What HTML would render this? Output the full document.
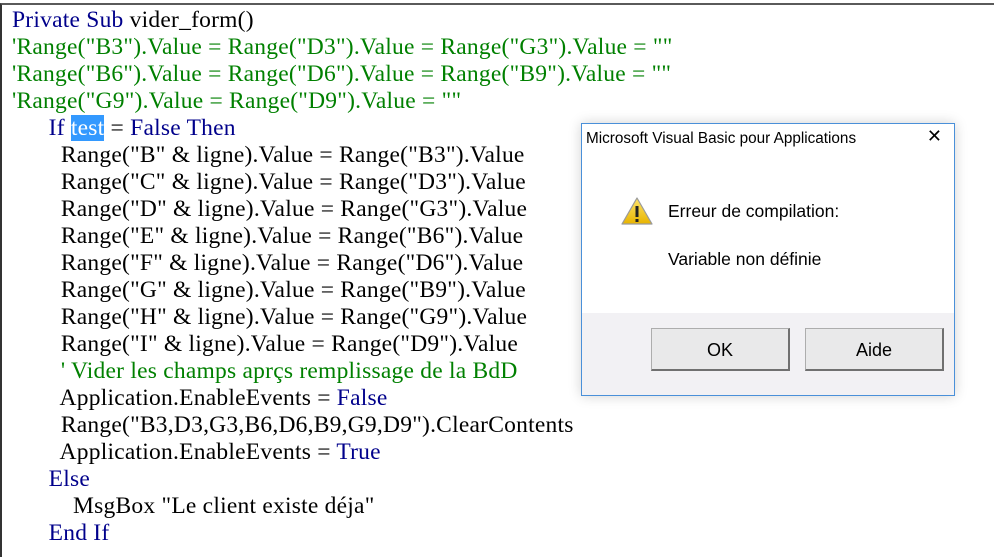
<!DOCTYPE html>
<html><head><meta charset="utf-8"><style>
html,body{margin:0;padding:0;width:994px;height:557px;overflow:hidden;background:#fff}
.ed{position:absolute;left:0;top:3px;width:994px;height:554px;border-top:2px solid #5a5a5a;border-left:2px solid #333;box-sizing:border-box;background:#fff}
.code{position:absolute;left:12px;top:7px;font-family:"Liberation Serif",serif;font-size:23.5px;letter-spacing:0.23px;line-height:27px;white-space:pre;color:#000}
.k{color:#00008b}.c{color:#008000}
.hl{background:#3399ff;color:#fff}
.dlg{position:absolute;left:581px;top:123px;width:374px;height:273px;box-sizing:border-box;border:1px solid #4a90d9;background:#fff;box-shadow:0 0 12px rgba(0,0,0,0.18)}
.title{position:absolute;left:4px;top:6px;color:#000;font-family:"Liberation Sans",sans-serif;font-size:15.3px}
.x{position:absolute;right:12px;top:2px;font-size:18px;color:#000;font-family:"Liberation Sans",sans-serif}
.msg{position:absolute;left:86px;color:#000;font-family:"Liberation Sans",sans-serif;font-size:17.5px}
.foot{position:absolute;left:0;right:0;top:189px;bottom:0;background:#f2f1f4}
.btn{position:absolute;top:15px;width:139px;height:43px;box-sizing:border-box;border:1px solid #adadad;border-right:2px solid #707070;border-bottom:2px solid #707070;background:#e9e9ea;text-align:center;line-height:42px;font-size:18px;font-family:"Liberation Sans",sans-serif}
</style></head><body>
<div class="ed"></div>
<div class="code"><span class="k">Private Sub</span> vider_form()
<span class="c">'Range("B3").Value = Range("D3").Value = Range("G3").Value = ""</span>
<span class="c">'Range("B6").Value = Range("D6").Value = Range("B9").Value = ""</span>
<span class="c">'Range("G9").Value = Range("D9").Value = ""</span>
      <span class="k">If</span> <span class="hl">test</span> = <span class="k">False Then</span>
        Range("B" &amp; ligne).Value = Range("B3").Value
        Range("C" &amp; ligne).Value = Range("D3").Value
        Range("D" &amp; ligne).Value = Range("G3").Value
        Range("E" &amp; ligne).Value = Range("B6").Value
        Range("F" &amp; ligne).Value = Range("D6").Value
        Range("G" &amp; ligne).Value = Range("B9").Value
        Range("H" &amp; ligne).Value = Range("G9").Value
        Range("I" &amp; ligne).Value = Range("D9").Value
        <span class="c">' Vider les champs aprçs remplissage de la BdD</span>
        Application.EnableEvents = <span class="k">False</span>
        Range("B3,D3,G3,B6,D6,B9,G9,D9").ClearContents
        Application.EnableEvents = <span class="k">True</span>
      <span class="k">Else</span>
          MsgBox "Le client existe déja"
      <span class="k">End If</span></div>
<div class="dlg">
<div class="title">Microsoft Visual Basic pour Applications</div>
<div class="x">✕</div>
<svg style="position:absolute;left:39px;top:73px" width="32" height="28" viewBox="0 0 32 28"><defs><linearGradient id="g" x1="0" y1="0" x2="0" y2="1"><stop offset="0" stop-color="#fde36a"/><stop offset="1" stop-color="#e8b400"/></linearGradient></defs><path d="M16 1 L31 27 L1 27 Z" fill="url(#g)" stroke="#9a9a9a" stroke-width="1.2" stroke-linejoin="round"/><rect x="14.5" y="9" width="3" height="11" fill="#222"/><rect x="14.5" y="22" width="3" height="3" fill="#222"/></svg>
<div class="msg" style="top:77px">Erreur de compilation:</div>
<div class="msg" style="top:125px">Variable non définie</div>
<div class="foot">
<div class="btn" style="left:69px">OK</div>
<div class="btn" style="left:223px">Aide</div>
</div>
</div>
</body></html>
